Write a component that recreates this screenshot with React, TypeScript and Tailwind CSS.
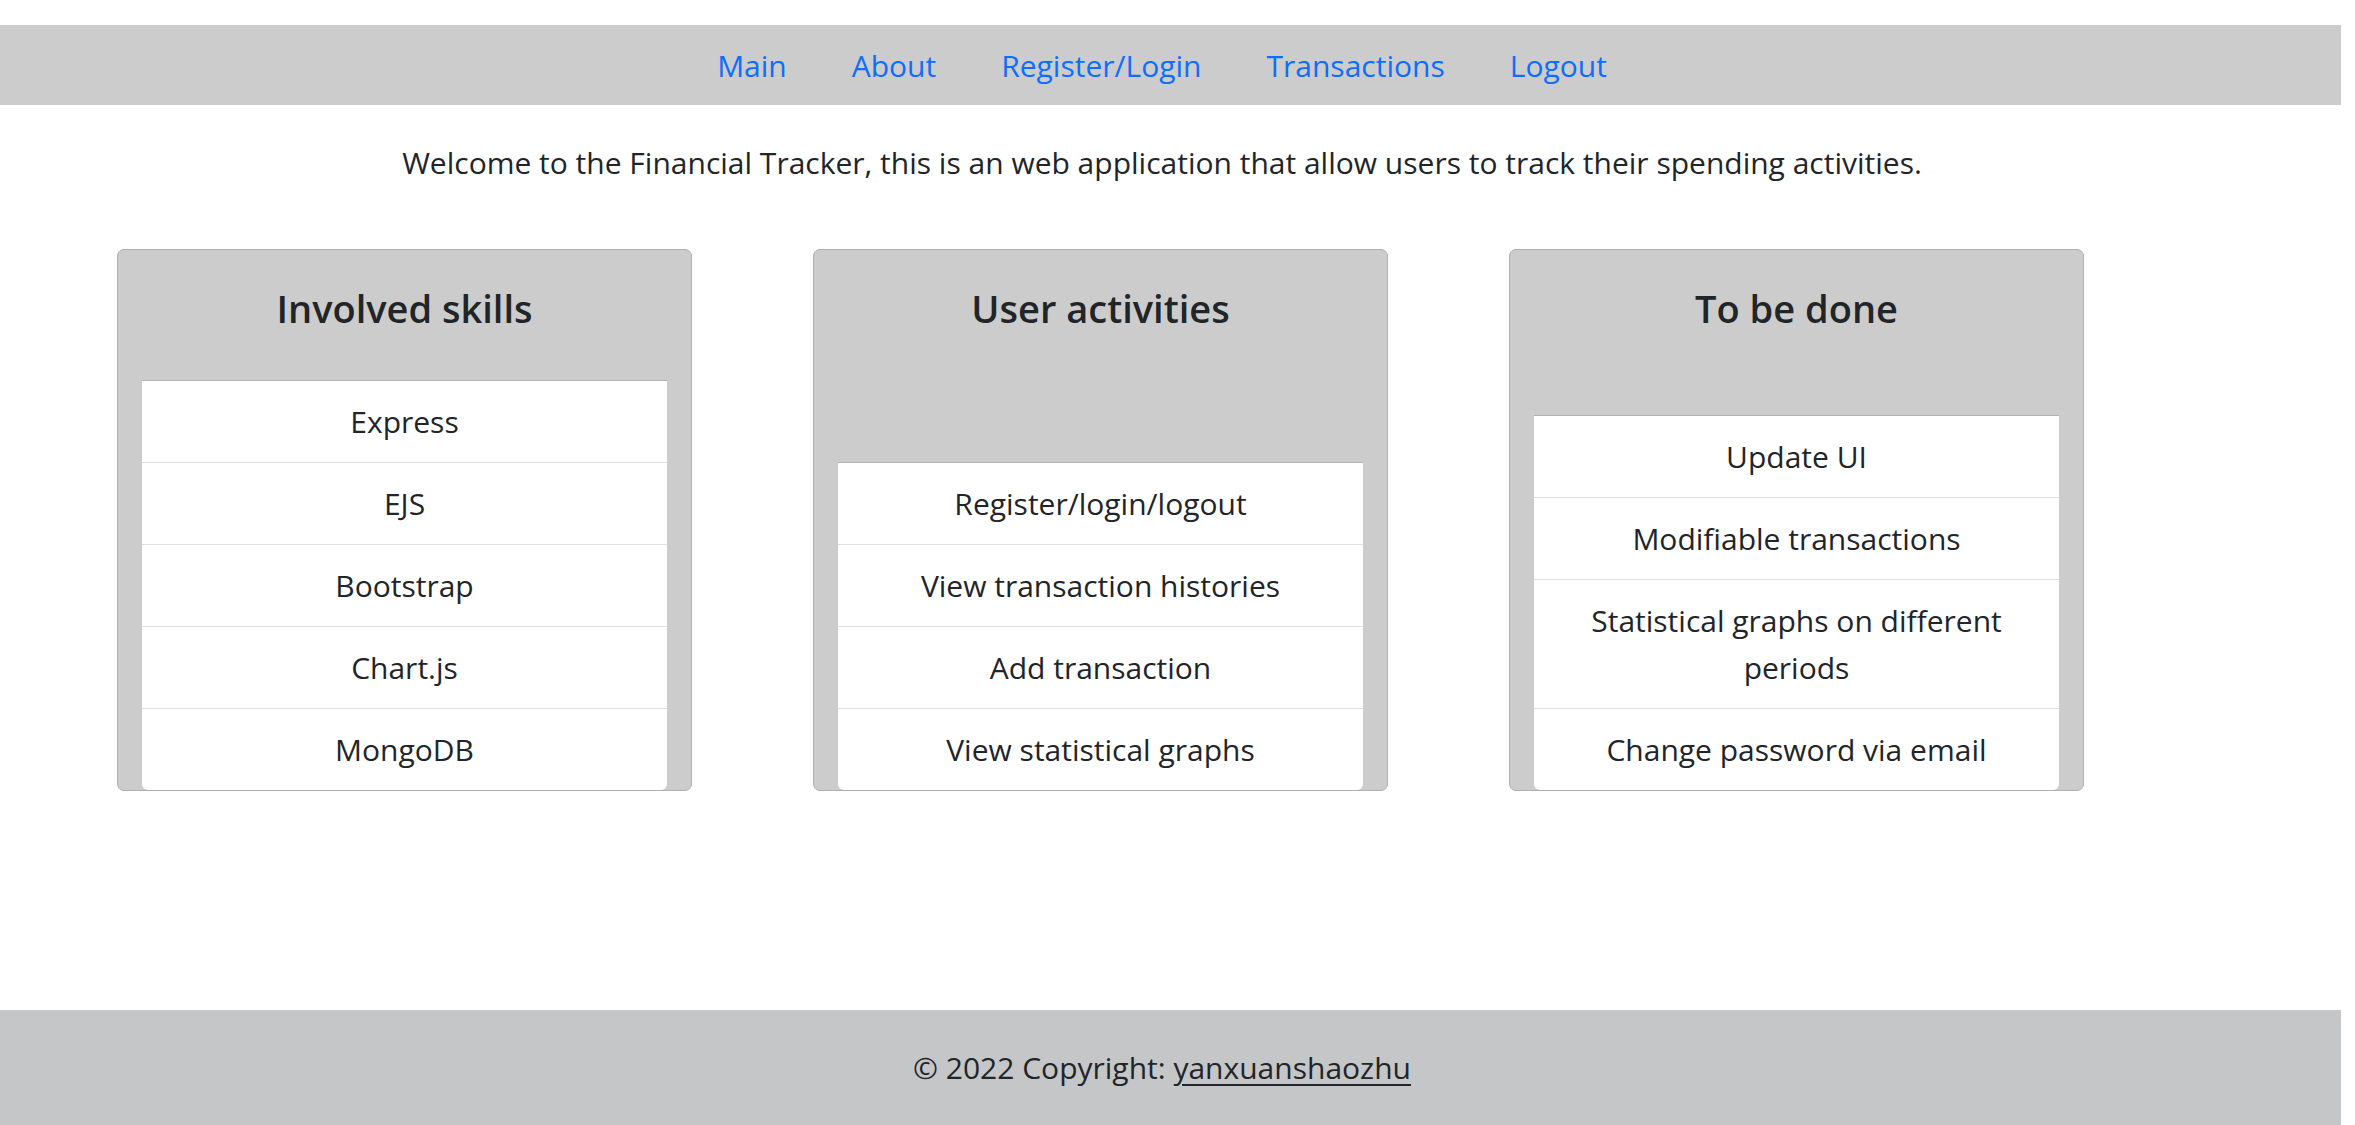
const font = "font-['Open_Sans','Liberation_Sans',sans-serif]";

const navLinks = ["Main", "About", "Register/Login", "Transactions", "Logout"];

const cards = [
  {
    title: "Involved skills",
    items: ["Express", "EJS", "Bootstrap", "Chart.js", "MongoDB"],
  },
  {
    title: "User activities",
    items: ["Register/login/logout", "View transaction histories", "Add transaction", "View statistical graphs"],
  },
  {
    title: "To be done",
    items: ["Update UI", "Modifiable transactions", "Statistical graphs on different periods", "Change password via email"],
  },
];

export default function App() {
  return (
    <div className={`${font} flex min-h-[1125px] w-[2341px] flex-col bg-white text-[#212529]`}>
      {/* Nav */}
      <nav className="mt-[25px] h-[80px] bg-[#cccccc]">
        <ul className="flex h-full w-[2324px] items-center justify-center gap-[65px]">
          {navLinks.map((l) => (
            <li key={l}>
              <a href="#" className="text-[30px] leading-[45px] text-[#0d6efd]">
                {l}
              </a>
            </li>
          ))}
        </ul>
      </nav>

      {/* Intro */}
      <p className="mt-[35px] w-[2324px] text-center text-[30px] leading-[45px]">
        Welcome to the Financial Tracker, this is an web application that allow users to track their spending activities.
      </p>

      {/* Cards */}
      <section className="mt-[64px] flex items-stretch gap-[121px] pl-[117px]">
        {cards.map((c) => (
          <Card key={c.title} title={c.title} items={c.items} />
        ))}
      </section>

      {/* Footer */}
      <footer className="mt-auto flex h-[115px] items-center bg-[#c5c6c8]">
        <div className="w-[2324px] text-center text-[30px] leading-[45px]">
          © 2022 Copyright:{" "}
          <a href="#" className="text-[#212529] underline decoration-2 underline-offset-[5px]">
            yanxuanshaozhu
          </a>
        </div>
      </footer>
    </div>
  );
}

function Card({ title, items }: { title: string; items: string[] }) {
  return (
    <div className="flex w-[575px] flex-col rounded-[7px] border-[1.5px] border-[#b0b0b0] bg-[#cccccc] px-[24px] pt-[34px]">
      <h3 className="mb-[48px] text-center text-[38px] font-semibold leading-[48px]">{title}</h3>
      <ul className="mt-auto overflow-hidden rounded-b-[6px] bg-white">
        {items.map((it, i) => (
          <li
            key={it}
            className={`border-t px-[24px] py-[17px] text-center text-[30px] leading-[47px] ${
              i === 0 ? "border-[#b2b2b2]" : "border-[#dfdfdf]"
            }`}
          >
            {it}
          </li>
        ))}
      </ul>
    </div>
  );
}
